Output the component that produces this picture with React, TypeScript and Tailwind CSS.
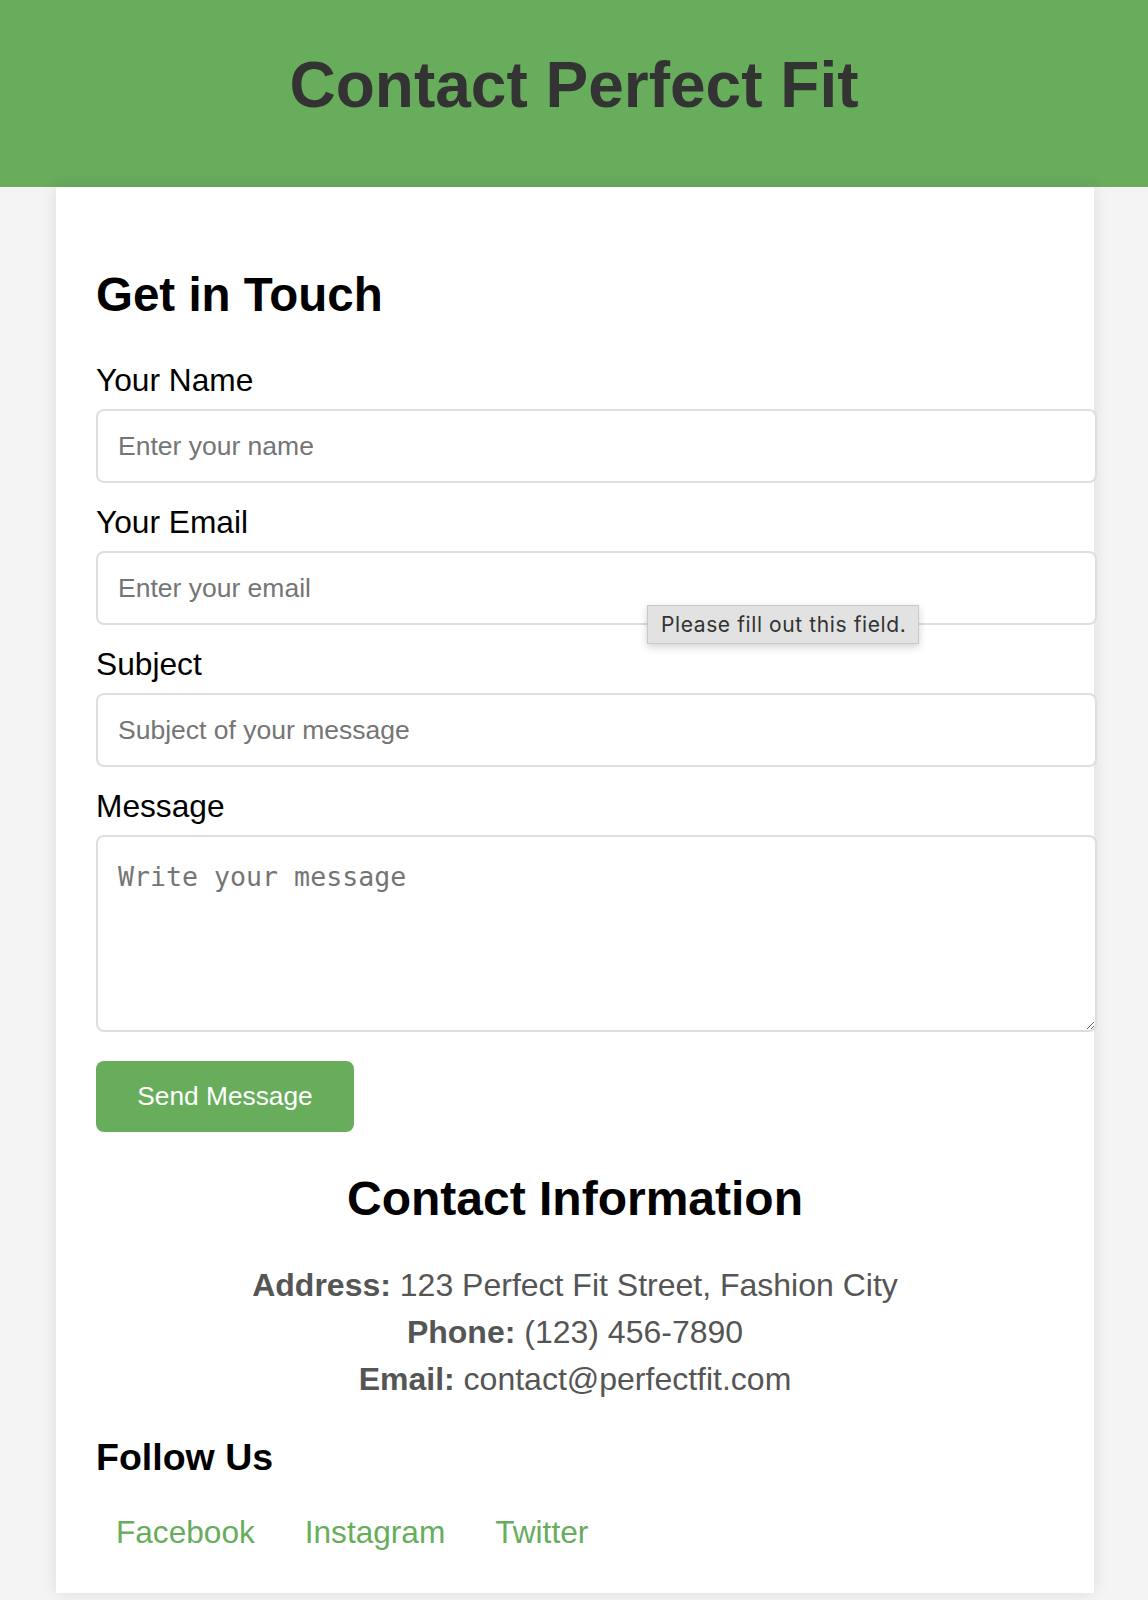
import React from 'react';

const fields = [
  { id: 'name', label: 'Your Name', placeholder: 'Enter your name', type: 'text' },
  { id: 'email', label: 'Your Email', placeholder: 'Enter your email', type: 'email' },
  { id: 'subject', label: 'Subject', placeholder: 'Subject of your message', type: 'text' },
];

const App: React.FC = () => {
  return (
    <div className="min-h-screen bg-[#f4f4f4] font-['Liberation_Sans',Arial,sans-serif]">
      {/* Header */}
      <header className="h-[187px] bg-[#67ad5c] pt-[49px] text-center">
        <h1 className="text-[64px] leading-[73.6px] font-bold text-[#333]">Contact Perfect Fit</h1>
      </header>

      <main className="ml-[56px] w-[1038px] bg-white px-10 pt-[80px] pb-[43px] shadow-[0_0_15px_rgba(0,0,0,0.1)]">
        <h2 className="text-[47.5px] leading-[55px] font-bold text-black mb-[41px]">Get in Touch</h2>

        <form onSubmit={(e) => e.preventDefault()}>
          {fields.map((f) => (
            <div key={f.id}>
              <label htmlFor={f.id} className="block text-[31.7px] leading-[35px] text-black mb-[11px]">
                {f.label}
              </label>
              <div className="relative mb-[22px]">
                <input
                  id={f.id}
                  type={f.type}
                  placeholder={f.placeholder}
                  className="block h-[74px] w-[1001px] rounded-[8px] border-2 border-[#dedede] bg-white px-[20px] text-[26.5px] text-black placeholder:text-[#757575] outline-none"
                />
                {f.id === 'email' && (
                  <div className="absolute left-[551px] top-[54px] z-10 flex h-[39px] w-[272px] items-center border border-[#c9c9c9] bg-[#e2e2e2] pl-[13px] font-['Inter',sans-serif] text-[21px] tracking-[0.6px] text-[#333] shadow-[0_3px_8px_rgba(0,0,0,0.18)]">
                    Please fill out this field.
                  </div>
                )}
              </div>
            </div>
          ))}

          <label htmlFor="message" className="block text-[31.7px] leading-[35px] text-black mb-[11px]">
            Message
          </label>
          <textarea
            id="message"
            placeholder="Write your message"
            className="block h-[197px] w-[1001px] rounded-[8px] border-2 border-[#dedede] bg-white p-[20px] font-['DejaVu_Sans_Mono',monospace] text-[26.6px] text-black placeholder:text-[#757575] outline-none mb-[29px]"
          />

          <button
            type="submit"
            className="block h-[71px] w-[258px] rounded-[8px] bg-[#67ad5c] text-center text-[26.3px] text-white"
          >
            Send Message
          </button>
        </form>

        {/* Contact info */}
        <section className="text-center">
          <h2 className="mt-[39px] text-[48px] leading-[55px] font-bold text-black mb-[36px]">Contact Information</h2>
          <p className="text-[32px] leading-[47px] text-[#555]">
            <strong>Address:</strong> 123 Perfect Fit Street, Fashion City
            <br />
            <strong>Phone:</strong> (123) 456-7890
            <br />
            <strong>Email:</strong> contact@perfectfit.com
          </p>
        </section>

        <h3 className="mt-[33px] text-[37.5px] leading-[42.5px] font-bold text-black">Follow Us</h3>
        <div className="mt-[35px] flex gap-[50px] pl-[20px] text-[31.6px] leading-[36px] text-[#67ad5c]">
          <a href="#">Facebook</a>
          <a href="#">Instagram</a>
          <a href="#">Twitter</a>
        </div>
      </main>
    </div>
  );
};

export default App;
